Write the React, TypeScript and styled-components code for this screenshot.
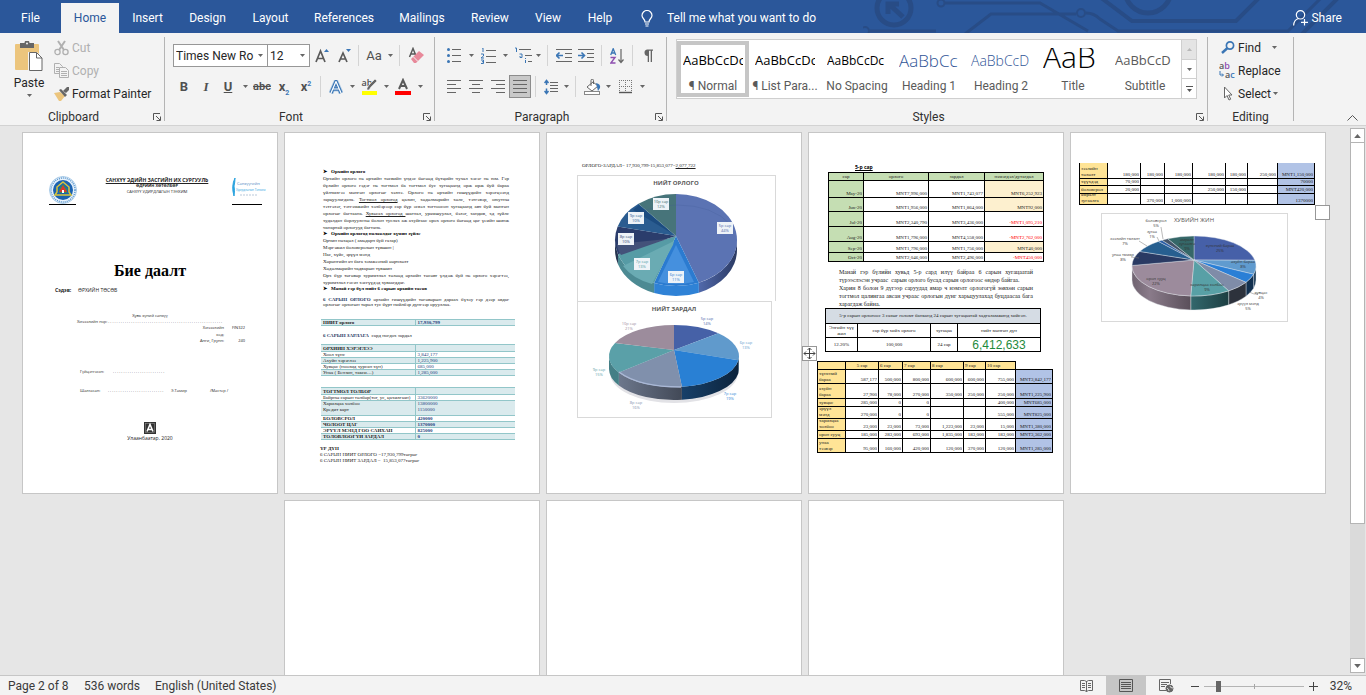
import React from "react";
import styled, { createGlobalStyle, css } from "styled-components";

const Global = createGlobalStyle`
  *, *::before, *::after { box-sizing: border-box; }
  html, body { margin: 0; padding: 0; overflow: hidden; }
  body { font-family: Roboto, "Noto Sans", sans-serif; font-size: 12px; color: #262626; }
  button, input, select { font: inherit; color: inherit; margin: 0; }
  table { border-collapse: collapse; table-layout: fixed; }
  th { font-weight: inherit; text-align: inherit; }
`;

const serif = `"Liberation Serif", "DejaVu Serif", serif`;

/* ---------- shell ---------- */

const Window = styled.div`
  height: 100vh;
  display: flex;
  flex-direction: column;
  background: #f3f3f3;
`;

const TitleBar = styled.header`
  position: relative;
  height: 33px;
  flex: none;
  display: flex;
  align-items: flex-end;
  background: #2b579a;
  color: #fff;
  overflow: hidden;
`;

const CircuitArt = styled.svg`
  position: absolute;
  right: 0;
  top: 0;
  fill: none;
  stroke: #284c86;
`;

const Tabs = styled.nav`
  display: flex;
  height: 30px;
`;

const Tab = styled.button<{ $w: number; $active?: boolean }>`
  width: ${(p) => p.$w}px;
  height: 30px;
  padding: 0;
  border: 0;
  text-align: center;
  background: ${(p) => (p.$active ? "#f3f3f3" : "transparent")};
  color: ${(p) => (p.$active ? "#2b579a" : "#fff")};
`;

const TellMe = styled.button`
  position: relative;
  display: flex;
  align-items: center;
  gap: 14px;
  height: 30px;
  margin-left: 15px;
  padding: 0;
  border: 0;
  background: transparent;
  color: #fff;
`;

const Share = styled(TellMe)`
  gap: 3px;
  margin-left: auto;
  margin-right: 24px;
`;

/* ---------- ribbon ---------- */

const Ribbon = styled.section`
  flex: none;
  height: 93px;
  display: flex;
  border-bottom: 1px solid #d2d2d2;
  background: #f3f3f3;
`;

const Group = styled.div<{ $w: number }>`
  width: ${(p) => p.$w}px;
  flex: none;
  display: flex;
  flex-direction: column;
`;

const Divider = styled.div`
  width: 1px;
  flex: none;
  margin: 4px 0;
  background: #b4b4b4;
`;

const Caption = styled.div`
  display: flex;
  align-items: center;
  height: 16px;
  margin-top: auto;
  text-align: center;
  color: #303030;
  span { flex: 1; }
`;

const Launcher = styled.button`
  width: 17px;
  height: 16px;
  padding: 0 0 0 6px;
  border: 0;
  background: transparent;
  display: flex;
  align-items: center;
`;

const ClipBody = styled.div`
  display: flex;
  padding: 3px 0 0 4px;
`;

const PasteButton = styled.button`
  width: 50px;
  padding: 5px 0 0;
  border: 0;
  background: transparent;
  display: flex;
  flex-direction: column;
  align-items: center;
  gap: 2px;
  line-height: 18px;
`;

const Stack = styled.div`
  display: flex;
  flex-direction: column;
`;

const LabelButton = styled.button<{ $off?: boolean; $gap: number }>`
  height: 23px;
  display: flex;
  align-items: center;
  gap: ${(p) => p.$gap}px;
  padding: 0;
  border: 0;
  background: transparent;
  white-space: nowrap;
  color: ${(p) => (p.$off ? "#b0b0b0" : "#262626")};
`;

const ToolBody = styled.div`
  display: flex;
  flex-direction: column;
  gap: 8px;
  padding: 11px 0 0 8px;
`;

const ToolRow = styled.div`
  display: flex;
  align-items: center;
  height: 23px;
`;

const Tool = styled.button<{ $w?: number; $on?: boolean }>`
  width: ${(p) => p.$w ?? 22}px;
  height: 23px;
  flex: none;
  display: flex;
  align-items: center;
  justify-content: center;
  padding: 0;
  border: ${(p) => (p.$on ? "1px solid #8c8c8c" : "0")};
  background: ${(p) => (p.$on ? "#c8c8c8" : "transparent")};
  color: #505050;
  line-height: 20px;
`;

const Bold = styled.b`font-size: 13px;`;
const Italic = styled.i`font-size: 13px; font-family: ${serif}; font-weight: bold;`;
const Under = styled.b`font-size: 13px; text-decoration: underline;`;
const Strike = styled.s`font-weight: 600; font-size: 11px;`;
const Script = styled.b`
  font-size: 13px;
  sub, sup { font-size: 7px; line-height: 0; color: #3b76b5; }
`;
const CaseLabel = styled.span`font-size: 13px;`;

const Bar = styled.div<{ $m: number }>`
  width: 1px;
  height: 21px;
  flex: none;
  margin: 0 ${(p) => p.$m}px;
  background: #d4d4d4;
`;

const Combo = styled.label<{ $w: number }>`
  position: relative;
  width: ${(p) => p.$w}px;
  height: 23px;
  flex: none;
  display: flex;
  align-items: center;
  border: 1px solid #979797;
  background: #fff;
  & + & { margin-left: -1px; }
  select {
    appearance: none;
    width: 100%;
    height: 21px;
    padding: 0 12px 0 2px;
    border: 0;
    background: transparent;
  }
  svg { position: absolute; right: 4px; top: 9px; pointer-events: none; }
`;

const Gallery = styled.div`
  display: flex;
  width: 521px;
  height: 60px;
  margin: 6px 0 0 9px;
  border: 1px solid #cfcfcf;
  background: #fff;
`;

const StyleCell = styled.button<{ $on?: boolean }>`
  width: 72px;
  height: 56px;
  margin-top: 1px;
  flex: none;
  display: flex;
  flex-direction: column;
  align-items: center;
  padding: 3px 0 0;
  border: 4px solid ${(p) => (p.$on ? "#c6c6c6" : "transparent")};
  background: transparent;
  color: #5a5a5a;
  line-height: 14px;
  white-space: nowrap;
`;

const Sample = styled.span<{ $size: number; $color: string; $light?: boolean }>`
  width: 60px;
  height: 24px;
  margin-bottom: 7px;
  flex: none;
  overflow: hidden;
  text-align: left;
  line-height: ${(p) => (p.$size > 20 ? 17 : 25)}px;
  font-family: "Open Sans", sans-serif;
  font-size: ${(p) => p.$size}px;
  font-weight: ${(p) => (p.$light ? 300 : 400)};
  color: ${(p) => p.$color};
`;

const GalleryNav = styled.div`
  width: 15px;
  display: flex;
  flex-direction: column;
  margin-left: auto;
  border-left: 1px solid #cfcfcf;
  button {
    flex: 1;
    display: flex;
    align-items: center;
    justify-content: center;
    padding: 0;
    border: 0;
    background: #fff;
  }
  button + button { border-top: 1px solid #cfcfcf; }
  button:first-child { background: #e4e4e4; }
`;

const EditBody = styled(Stack)`padding: 3px 0 0 11px;`;

const IconSlot = styled.span`
  width: 17px;
  flex: none;
  display: flex;
  justify-content: center;
`;

const Collapse = styled.button`
  margin: auto 8px 1px auto;
  padding: 0;
  border: 0;
  background: transparent;
`;

/* ---------- document area ---------- */

const Workspace = styled.main`
  flex: 1;
  min-height: 0;
  display: flex;
  background: #e6e6e6;
`;

const Desk = styled.div`
  flex: 1;
  overflow: hidden;
  display: flex;
  flex-wrap: wrap;
  align-content: flex-start;
  justify-content: center;
  gap: 6px;
  padding: 6px 1px 0 0;
`;

const Page = styled.article`
  position: relative;
  width: 256px;
  height: 362px;
  flex: none;
  border: 1px solid #c6c6c6;
  background: #fff;
  color: #222;
  font-family: ${serif};
  font-size: 5px;
  line-height: 6px;
`;

const Scroll = styled.div`
  width: 17px;
  display: flex;
  flex-direction: column;
  padding: 2px 1px;
`;

const ScrollTrack = styled.div`
  flex: 1;
  background: #dadada;
`;

const ScrollThumb = styled.div`
  height: 74%;
  border: 1px solid #b4b4b4;
  border-top: 0;
  background: #fff;
`;

const ScrollButton = styled.button`
  height: 15px;
  display: flex;
  align-items: center;
  justify-content: center;
  padding: 0;
  border: 1px solid #b4b4b4;
  background: #fff;
`;

const Handle = styled.button<{ $x: number; $y: number }>`
  position: absolute;
  left: ${(p) => p.$x}px;
  top: ${(p) => p.$y}px;
  width: 15px;
  height: 15px;
  display: flex;
  align-items: center;
  justify-content: center;
  padding: 0;
  border: 1px solid #979797;
  background: #fff;
  z-index: 1;
`;

/* ---------- cover page ---------- */

const CoverHead = styled.div`
  display: flex;
  justify-content: space-between;
  padding: 43px 15px 0 26px;
  font-family: "Open Sans", sans-serif;
  text-align: center;
`;

const Crest = styled.div<{ $w: number }>`
  width: ${(p) => p.$w}px;
  height: 29px;
  border-bottom: 1px solid #000;
  svg { overflow: visible; }
`;

const School = styled.div`
  padding: 1px 0 0 6px;
  white-space: nowrap;
  font-size: 4px;
  b { display: block; }
  b:first-child { font-size: 5px; text-decoration: underline; }
`;

const CoverTitle = styled.h1`
  margin: 56px 0 0;
  font: bold 16px/20px ${serif};
  text-align: center;
  color: #000;
`;

const CoverRow = styled.div<{ $top?: number; $left?: number; $size?: number }>`
  display: flex;
  height: 6px;
  margin-top: ${(p) => p.$top ?? 0}px;
  padding-left: ${(p) => p.$left ?? 0}px;
  justify-content: ${(p) => (p.$left ? "flex-start" : "center")};
  font-family: "Open Sans", sans-serif;
  font-size: ${(p) => p.$size ?? 4}px;
  white-space: nowrap;
`;

const Slot = styled.span<{ $w: number; $right?: boolean }>`
  width: ${(p) => p.$w}px;
  flex: none;
  text-align: ${(p) => (p.$right ? "right" : "left")};
`;

const CoverMark = styled.div`
  display: flex;
  justify-content: center;
  height: 12px;
  margin: 28px 0 1px;
`;

/* ---------- report pages ---------- */

const Report = styled.div`
  padding: 36px 30px 0 38px;
`;

const Bullet = styled.h2`
  display: flex;
  gap: 4px;
  margin: 0;
  font: bold 5px/6px ${serif};
  color: #000;
`;

const Line = styled.p<{ $fill?: boolean; $h?: number; $top?: number; $size?: number }>`
  height: ${(p) => p.$h ?? 7}px;
  line-height: ${(p) => p.$h ?? 7}px;
  margin: ${(p) => p.$top ?? 0}px 0 0;
  font-size: ${(p) => p.$size ?? 5}px;
  white-space: nowrap;
  ${(p) => p.$fill && css`text-align: justify; text-align-last: justify;`}
  b { color: #1f3864; }
`;

const Ledger = styled.table<{ $top: number }>`
  width: 194px;
  margin: ${(p) => p.$top}px 0 0 -2px;
  border-bottom: 1px solid #92c6c9;
  line-height: 5px;
  td, th {
    border-top: 1px solid #92c6c9;
    padding: 0 0 0 2px;
    white-space: nowrap;
    overflow: hidden;
  }
  td:last-child { border-left: 1px solid #92c6c9; color: #24427c; }
`;

const LedgerRow = styled.tr<{ $h: number; $tint?: boolean; $bold?: boolean; $join?: boolean }>`
  height: ${(p) => p.$h}px;
  background: ${(p) => (p.$tint ? "#daeaed" : "#fff")};
  font-weight: ${(p) => (p.$bold ? "bold" : "normal")};
  vertical-align: ${(p) => (p.$join ? "top" : "middle")};
  && td { ${(p) => p.$join && css`border-top-color: #daeaed;`} }
`;

const Summary = styled.div`
  margin: 6px 0 0 -3px;
`;

const ChartPage = styled.div`
  padding: 30px 0 0 30px;
`;

const ChartFrame = styled.figure<{ $w: number; $h: number; $joined?: boolean }>`
  width: ${(p) => p.$w}px;
  height: ${(p) => p.$h}px;
  margin: 0;
  border: 1px solid #d9d9d9;
  border-bottom-width: ${(p) => (p.$joined ? 0 : 1)}px;
  svg { display: block; overflow: visible; }
`;

const ChartText = styled.text<{ $size?: number; $start?: boolean }>`
  font-family: "Open Sans", sans-serif;
  font-size: ${(p) => p.$size ?? 4}px;
  text-anchor: ${(p) => (p.$start ? "start" : "middle")};
`;

const Grid = styled.table<{ $w: number; $ml: number; $mt: number; $open?: boolean }>`
  width: ${(p) => p.$w}px;
  margin: ${(p) => p.$mt}px 0 0 ${(p) => p.$ml}px;
  font-size: 5px;
  line-height: 6px;
  color: #222;
  ${(p) => p.$open && css`tr:first-child td { border-top: 0; }`}
`;

type CellProps = { $bg?: string; $align?: string; $v?: string; $bare?: boolean; $color?: string };
const Cell = styled.td<CellProps>`
  padding: 0 1px;
  overflow: hidden;
  white-space: nowrap;
  border: ${(p) => (p.$bare ? "0" : "1px solid #000")};
  background: ${(p) => p.$bg ?? "transparent"};
  text-align: ${(p) => p.$align ?? "right"};
  vertical-align: ${(p) => p.$v ?? "bottom"};
  color: ${(p) => p.$color ?? "inherit"};
`;

const Clip = styled.div<{ $h: number }>`
  height: ${(p) => p.$h}px;
  display: flex;
  flex-direction: column;
  justify-content: flex-end;
  overflow: hidden;
  white-space: pre;
`;

const MonthTitle = styled.h2`
  margin: 0 0 0 46px;
  padding-top: 31px;
  font: bold 5px/7px "Open Sans", sans-serif;
  text-decoration: underline;
  color: #000;
`;

const Note = styled.div`
  margin: 6px 30px 0;
`;

const Total = styled.span`
  font: 12px/12px "Liberation Sans", sans-serif;
  color: #1e8a3c;
`;

const ChartHolder = styled.div`padding: 8px 0 0 30px;`;

const Equation = styled.p`
  margin: 0 0 6px 5px;
  line-height: 6px;
  white-space: nowrap;
`;

/* ---------- status bar ---------- */

const Status = styled.footer`
  flex: none;
  height: 20px;
  display: flex;
  align-items: center;
  border-top: 1px solid #c6c6c6;
  padding: 1px 14px 0 8px;
  line-height: 18px;
  color: #3a3a3a;
`;

const StatusItem = styled.span<{ $w: number }>`
  width: ${(p) => p.$w}px;
  white-space: nowrap;
`;

const Spacer = styled.div`flex: 1;`;

const ViewButton = styled.button<{ $on?: boolean }>`
  width: 40px;
  height: 19px;
  margin-top: -1px;
  display: flex;
  align-items: center;
  justify-content: center;
  padding: 0;
  border: 0;
  background: ${(p) => (p.$on ? "#c6c6c6" : "transparent")};
`;

const ZoomButton = styled.button`
  width: 18px;
  height: 18px;
  display: flex;
  align-items: center;
  justify-content: center;
  padding: 0;
  border: 0;
  background: transparent;
`;

const ZoomRange = styled.input`
  appearance: none;
  width: 100px;
  height: 11px;
  background:
    linear-gradient(#a6a6a6, #a6a6a6) center / 1px 5px no-repeat,
    linear-gradient(#b4b4b4, #b4b4b4) center / 100% 1px no-repeat;
  &::-webkit-slider-thumb {
    appearance: none;
    width: 5px;
    height: 11px;
    background: #666;
  }
`;

const ZoomValue = styled.span`
  width: 30px;
  text-align: right;
`;

/* ---------- icons ---------- */

const Arrow = ({ up, big, color = "#666" }: { up?: boolean; big?: boolean; color?: string }) => (
  <svg width={big ? 7 : 5} height={big ? 4 : 3} viewBox="0 0 5 3"><path d={up ? "M0 3h5L2.500 0z" : "M0 0h5L2.500 3z"} fill={color} /></svg>
);

const Drop = ({ w = 12 }: { w?: number }) => (
  <Tool $w={w} aria-label="More"><Arrow /></Tool>
);

const LauncherIcon = () => (
  <svg width="8" height="8" viewBox="0 0 8 8" fill="none" stroke="#555"><path d="M.5 7V.5H7M3 3l4 4M7.500 3.500v4h-4" /></svg>
);

const PasteIcon = () => (
  <svg width="28" height="31" viewBox="0 0 28 31">
    <rect x="0" y="3" width="24" height="26" rx="1" fill="#ecc57d" />
    <path d="M5 2h4.500a2.500 2.500 0 0 1 5 0H19v5H5z" fill="#666" /><circle cx="12" cy="2.500" r="1" fill="#f3f3f3" />
    <path d="M13 11h9l6 6v14H13z" fill="#f3f3f3" />
    <path d="M14.500 11.500h7l5.500 5.500v12.500H14.500z" fill="#fff" stroke="#666" /><path d="M21.500 11.500V17H27" fill="none" stroke="#666" />
  </svg>
);
const CutIcon = () => (
  <svg width="15" height="16" viewBox="0 0 15 16" fill="none" stroke="#b0b0b0"><path d="M4 1l6 9M11 1L5 10" strokeWidth="2" /><circle cx="3.500" cy="12" r="2.600" strokeWidth="1.300" /><circle cx="11.500" cy="12" r="2.600" strokeWidth="1.300" /></svg>
);
const CopyIcon = () => (
  <svg width="15" height="15" viewBox="0 0 15 15" fill="#f3f3f3" stroke="#b0b0b0"><path d="M.5.5h5l3 3v7h-8zM2 4.500h3M2 6.500h4M2 8.500h4" /><path d="M5.500 4.500h6l3 3v7h-9zM7 8.500h6M7 10.500h6M7 12.500h6" /></svg>
);
const BrushIcon = () => (
  <svg width="16" height="14" viewBox="0 0 16 14"><path d="M0 6l6-1 5 4-4 5H5z" fill="#ecc57d" /><path d="M5 3l2-1 6 6-2 2z" fill="#666" /><path d="M9 4l4-4 2 0v3l-3 3z" fill="#666" /></svg>
);

const GrowIcon = ({ small }: { small?: boolean }) => (
  <svg width="14" height="16" viewBox="0 0 14 16">
    <path d={small ? "M2 14L6 5l4 9M3.500 11h5" : "M1 14L5.500 3l4.500 11M2.500 10.500h6"} fill="none" stroke="#5a5a5a" strokeWidth="1.700" />
    <path d={small ? "M9 1h5l-2.500 3z" : "M9 4h5l-2.500-3z"} fill="#3b76b5" />
  </svg>
);
const ClearIcon = () => (
  <svg width="16" height="17" viewBox="0 0 16 17"><path d="M1.500 10L5 1.500 8.500 10M2.800 7h4.500" fill="none" stroke="#5a5a5a" strokeWidth="1.500" /><path d="M3 12l8-8 5 4-8 8H6z" fill="#e8899a" /><path d="M5 9.500l5 5" stroke="#f3f3f3" /></svg>
);
const EffectIcon = () => (
  <svg width="14" height="14" viewBox="0 0 14 14" fill="none" strokeLinejoin="round"><path d="M2 13L7 1.500 12 13M4 9h6" stroke="#86b3dc" strokeWidth="5" opacity=".5" /><path d="M2 13L7 1.500 12 13M4 9h6" stroke="#3b76b5" strokeWidth="3.400" /><path d="M2 13L7 1.500 12 13M4 9h6" stroke="#fff" strokeWidth="1.200" /></svg>
);
const HighlightIcon = () => (
  <svg width="17" height="17" viewBox="0 0 17 17"><ChartText x="6" y="8" $size={9} fill="#505050" fontWeight="600">ab</ChartText><path d="M14 1l2 2-6 6-2 3H6v-2l2-3z" fill="#666" stroke="#f3f3f3" strokeWidth=".6" /><path d="M1 13h15v4H1z" fill="#ff0" /></svg>
);
const FontColorIcon = () => (
  <svg width="16" height="17" viewBox="0 0 16 17"><path d="M4 11L8 2l4 9M5.500 8h5" fill="none" stroke="#5a5a5a" strokeWidth="2" /><path d="M0 13h16v4H0z" fill="red" /></svg>
);
const BulletsIcon = () => (
  <svg width="14" height="15" viewBox="0 0 14 15"><g fill="#3b76b5"><circle cx="1.500" cy="1.500" r="1.500" /><circle cx="1.500" cy="7.500" r="1.500" /><circle cx="1.500" cy="13.500" r="1.500" /></g><path d="M5 1.500h9M5 7.500h9M5 13.500h9" stroke="#666" /></svg>
);
const NumberIcon = () => (
  <svg width="15" height="16" viewBox="0 0 15 16" fill="#3b76b5"><path d="M1 0h1v4M0 6h2.500v2L0 10h3M0 12h2.500v3.500H0M1 13.700h1.500" fill="none" stroke="#3b76b5" /><path d="M5 2.500h10M5 8.500h10M5 14.500h10" stroke="#666" /></svg>
);
const MultiIcon = () => (
  <svg width="17" height="17" viewBox="0 0 17 17" fill="none"><path d="M0 1h1.500v4M4.500 7h2.500v3.500H5V9M10.500 11v1M10.500 13v3" stroke="#3b76b5" /><path d="M4 2.500h12M10 8.500h7M13 14.500h4" stroke="#666" /></svg>
);
const IndentIcon = ({ inward }: { inward?: boolean }) => (
  <svg width="16" height="14" viewBox="0 0 16 14" fill="none"><path d="M0 .5h16M9 4.500h7M9 8.500h7M0 12.500h16" stroke="#666" /><path d={inward ? "M0 6.500h6M3.500 3.500l3 3-3 3" : "M7 6.500H1M3.500 3.500l-3 3 3 3"} stroke="#3b76b5" strokeWidth="1.600" /></svg>
);
const SortIcon = () => (
  <svg width="14" height="16" viewBox="0 0 14 16" fill="none"><path d="M.7 7L3.200.7 5.700 7M1.500 5h3.500" stroke="#3b76b5" strokeWidth="1.300" /><path d="M.5 9.500H5L.8 15H5.500" stroke="#8e4fb0" strokeWidth="1.400" /><path d="M11 1v13M8.500 11.500L11 14.500l2.500-3" stroke="#666" strokeWidth="1.200" /></svg>
);
const PilcrowIcon = () => (
  <svg width="11" height="13" viewBox="0 0 11 13"><path d="M5 .5h6v1.200H10V13H8.700V1.700H7V13H5.700V7A3.300 3.300 0 0 1 5 .5z" fill="#666" /></svg>
);
const alignPaths: Record<string, string> = {
  left: "M0 .5h14M0 4.500h9M0 8.500h14M0 12.500h9",
  center: "M0 .5h14M3 4.500h8M0 8.500h14M3 12.500h8",
  right: "M0 .5h14M5 4.500h9M0 8.500h14M5 12.500h9",
  justify: "M0 .5h14M0 4.500h14M0 8.500h14M0 12.500h14",
};
const AlignIcon = ({ kind }: { kind: string }) => (
  <svg width="14" height="13" viewBox="0 0 14 13"><path d={alignPaths[kind]} stroke="#666" fill="none" /></svg>
);
const SpacingIcon = () => (
  <svg width="14" height="16" viewBox="0 0 14 16" fill="none"><path d="M2.500 1v5M.5 4l2-2.500 2 2.500M2.500 9.500v5M.5 12l2 2.500 2-2.500" stroke="#3b76b5" strokeWidth="1.500" /><path d="M6 3.500h8M6 6.500h8M6 9.500h8M6 12.500h8" stroke="#666" /></svg>
);
const FillIcon = () => (
  <svg width="17" height="16" viewBox="0 0 17 16"><path d="M3 8l6-5 5 4-6 5z" fill="#fff" stroke="#666" /><path d="M7 7V1.500a1.200 1.200 0 0 1 2.500 0V5" fill="none" stroke="#666" /><path d="M12 4q5 1 4 5l-2 3z" fill="#3b76b5" /><rect x=".5" y="12.500" width="15" height="3" fill="#fff" stroke="#888" /></svg>
);
const BordersIcon = () => (
  <svg width="13" height="14" viewBox="0 0 13 14" fill="none" stroke="#777"><path d="M0 .5h13M0 6.500h13M.5 0v12M6.500 0v12M12.500 0v12" strokeDasharray="1 1" /><path d="M0 12.500h13" stroke="#555" strokeWidth="1.400" /></svg>
);
const FindIcon = () => (
  <svg width="14" height="13" viewBox="0 0 14 13" fill="none"><circle cx="9" cy="4.500" r="3.600" stroke="#3b76b5" strokeWidth="1.700" /><path d="M6.500 7L1 12" stroke="#3b76b5" strokeWidth="2.400" /></svg>
);
const ReplaceIcon = () => (
  <svg width="17" height="17" viewBox="0 0 17 17" fontWeight="600"><ChartText x="0" y="7" $start $size={9} fill="#555">a<tspan fill="#8e4fb0">b</tspan></ChartText><ChartText x="6" y="16" $start $size={9} fill="#555">a<tspan fill="#3b76b5">c</tspan></ChartText><path d="M1 9v4h3M3 11.500l1.500 1.500L3 14.500" fill="none" stroke="#3b76b5" /></svg>
);
const SelectIcon = () => (
  <svg width="10" height="15" viewBox="0 0 10 15"><path d="M1.500 1v11l2.500-2.500L6 14l1.700-.8-2-4.200H9z" fill="#fff" stroke="#666" /></svg>
);
const BulbIcon = () => (
  <svg width="12" height="17" viewBox="0 0 12 17" fill="none" stroke="#fff" strokeWidth="1.200"><path d="M4 12c0-3-3-3.500-3-6.500a5 5 0 0 1 10 0C11 8.500 8 9 8 12zM4 14h4M4.500 16h3" /></svg>
);
const ShareIcon = () => (
  <svg width="15" height="16" viewBox="0 0 15 16" fill="none" stroke="#fff" strokeWidth="1.200"><circle cx="7.500" cy="4.800" r="4.200" /><path d="M.6 15.500q.4-6 5-7M11.500 9v6.500M8 12.300h7" /></svg>
);
const MoveIcon = () => (
  <svg width="13" height="13" viewBox="0 0 13 13" fill="none" stroke="#444"><path d="M6.500 1v11M1 6.500h11M4.500 3l2-2 2 2M4.500 10l2 2 2-2M3 4.500l-2 2 2 2M10 4.500l2 2-2 2" /></svg>
);
const ReadIcon = () => (
  <svg width="13" height="12" viewBox="0 0 13 12" fill="none" stroke="#666"><path d="M.5.500h4l2 1 2-1h4v10h-4l-2 1-2-1h-4zM6.500 1v11M2 3.500h3M2 5.500h3M2 7.500h3M8 3.500h3M8 5.500h3M8 7.500h3" /></svg>
);
const PrintIcon = () => (
  <svg width="14" height="13" viewBox="0 0 14 13" fill="none" stroke="#555"><path d="M.5.5h13v12H.5zM2 3.500h10M2 5.500h10M2 7.500h10M2 9.500h10" /></svg>
);
const WebIcon = () => (
  <svg width="15" height="14" viewBox="0 0 15 14" fill="none" stroke="#666"><path d="M7 11.500H.5V.5h11V5M2 3.500h8M2 5.500h6M2 7.500h4" /><circle cx="10.500" cy="9.500" r="3.500" fill="#666" /><path d="M8 9q2 1 2 3M11 7q0 2 3 2" stroke="#f3f3f3" strokeWidth=".8" /></svg>
);

const Circuit = () => (
  <CircuitArt width="503" height="33" viewBox="863 0 503 33" strokeWidth="4" aria-hidden="true">
    <circle cx="894" cy="8" r="17" strokeWidth="5" />
    <path d="M903 17L890 5M888 14V4h11" strokeWidth="5" />
    <path d="M870 31h66" strokeWidth="3" /><circle cx="865" cy="31" r="4" strokeWidth="2" />
    <circle cx="941" cy="3" r="3.500" strokeWidth="2" />
    <path d="M945 3h95l48 28M965 34l26-20h85M1086 13q8 0 14 6l18 12h170l34-34" strokeWidth="3" />
    <circle cx="1081" cy="13" r="4" strokeWidth="2" />
    <path d="M1100-3l32 24h104l26-26M1300 36l38-38" strokeWidth="4" />
    <circle cx="1148" cy="-10" r="23" strokeWidth="5" />
  </CircuitArt>
);

/* ---------- 3-D pie ---------- */

type Slice = { to: number; top: string; side: string };
type PieProps = { cx: number; cy: number; hub: number; rx: number; ry: number; depth: number; edge?: string; slices: Slice[] };

function Pie({ cx, cy, hub, rx, ry, depth, edge, slices }: PieProps) {
  const at = (deg: number) => {
    const t = (deg * Math.PI) / 180;
    return [cx + rx * Math.sin(t), cy - ry * Math.cos(t)];
  };
  const parts = slices.map((s, i) => ({ ...s, from: i ? slices[i - 1].to : 0 }));
  return (
    <g>
      {parts.map((s, i) => {
        const a = Math.max(s.from, 90);
        const b = Math.min(s.to, 270);
        if (a >= b) return null;
        const [x0, y0] = at(a);
        const [x1, y1] = at(b);
        return <path key={i} fill={s.side} stroke={edge} strokeWidth=".4" d={`M${x0} ${y0}V${y0 + depth}A${rx} ${ry} 0 0 1 ${x1} ${y1 + depth}V${y1}A${rx} ${ry} 0 0 0 ${x0} ${y0}Z`} />;
      })}
      {parts.map((s, i) => {
        const [x0, y0] = at(s.from);
        const [x1, y1] = at(s.to);
        return <path key={i} fill={s.top} stroke={edge} strokeWidth=".4" d={`M${cx} ${hub}L${x0} ${y0}A${rx} ${ry} 0 ${s.to - s.from > 180 ? 1 : 0} 1 ${x1} ${y1}Z`} />;
      })}
    </g>
  );
}

type LabelProps = { x: number; y: number; name: string; pct?: string; color?: string; boxed?: boolean };
const PieLabel = ({ x, y, name, pct, color = "#333", boxed }: LabelProps) => (
  <g fill={color}>
    {boxed && <rect x={x - 8} y={y - 5} width="16" height="12" fill="#eef3f8" />}
    <ChartText x={x} y={y}>{name}</ChartText>
    {pct && <ChartText x={x} y={y + 5}>{pct}</ChartText>}
  </g>
);

const IncomeChart = () => (
  <ChartFrame $w={199} $h={126} $joined>
    <svg width="197" height="125" viewBox="1 1 197 125" role="img" aria-label="НИЙТ ОРЛОГО">
      <defs><linearGradient id="wall" x1="0" x2="1"><stop offset="0" stopColor="#5169ab" /><stop offset="1" stopColor="#2b3a63" /></linearGradient></defs>
      <ChartText x="99" y="10" $size={6} fontWeight="bold" fill="#595959">НИЙТ ОРЛОГО</ChartText>
      <Pie cx={99} cy={65} hub={61} rx={61} ry={46} depth={10} slices={[
        { to: 158, top: "#5b73b3", side: "url(#wall)" }, { to: 201, top: "#2b7bd0", side: "#2f82d6" },
        { to: 252, top: "#569ba5", side: "#4c8a93" }, { to: 287, top: "#2b3d6c", side: "#26344f" },
        { to: 322, top: "#2a5c90", side: "#24588f" }, { to: 360, top: "#47747a", side: "#47747a" },
      ]} />
      <path d="M99 70L81 107q18 4 36 0z" fill="#4590de" />
      <path d="M97 66L46 91q10 13 29 18L96 70z" fill="#6aabb3" />
      <path d="M90 64L40 69q0 5 4 11z" fill="#43527a" />
      <path d="M96 59L62 30l-6 5z" fill="#1c4c80" />
      <path d="M46 50q18-20 54-20t54 20" fill="none" stroke="#3f5a93" strokeWidth=".4" opacity=".6" />
      <PieLabel x={148} y={52} name="5р сар" pct="44%" color="#4661a7" boxed />
      <PieLabel x={99} y={101} name="6р сар" pct="11%" color="#2b7bd0" boxed />
      <PieLabel x={65} y={88} name="7р сар" pct="13%" color="#4b9aa2" boxed />
      <PieLabel x={49} y={63} name="8р сар" pct="10%" color="#2b3d6c" boxed />
      <PieLabel x={59} y={42} name="9р сар" pct="10%" color="#24588f" boxed />
      <PieLabel x={84} y={28} name="10р сар" pct="12%" color="#356768" boxed />
    </svg>
  </ChartFrame>
);

const ExpenseChart = () => (
  <ChartFrame $w={195} $h={117}>
    <svg width="193" height="115" viewBox="1 1 193 115" role="img" aria-label="НИЙТ ЗАРДАЛ">
      <defs><linearGradient id="navy" x1="0" x2="1"><stop offset="0" stopColor="#174069" /><stop offset="1" stopColor="#0c233c" /></linearGradient>
        <linearGradient id="slate" x1="0" x2="1"><stop offset="0" stopColor="#6c778c" /><stop offset="1" stopColor="#424957" /></linearGradient></defs>
      <ChartText x="97" y="10" $size={6} fontWeight="bold" fill="#595959">НИЙТ ЗАРДАЛ</ChartText>
      <ellipse cx="97" cy="72" rx="64" ry="30" fill="#e2e2e6" />
      <Pie cx={97} cy={55} hub={49} rx={65} ry={31} depth={13} slices={[
        { to: 43, top: "#4661a7", side: "#2f3f70" }, { to: 98, top: "#609acc", side: "#1d4668" },
        { to: 173, top: "#2980d4", side: "url(#navy)" }, { to: 238, top: "#8090ac", side: "url(#slate)" },
        { to: 295, top: "#5aa0a8", side: "#447f86" }, { to: 360, top: "#9c8c9c", side: "#6c5f6c" },
      ]} />
      <path d="M42 71q20 15 62 15" fill="none" stroke="#a9b8d6" strokeWidth="1.500" />
      <PieLabel x={130} y={19} name="5р сар" pct="14%" color="#4661a7" />
      <PieLabel x={169} y={43} name="6р сар" pct="13%" color="#609acc" />
      <PieLabel x={153} y={94} name="7р сар" pct="19%" color="#2980d4" />
      <PieLabel x={59} y={103} name="8р сар" pct="16%" color="#8090ac" />
      <PieLabel x={22} y={70} name="9р сар" pct="15%" color="#5aa0a8" />
      <PieLabel x={52} y={24} name="10р сар" pct="21%" color="#9c8c9c" />
    </svg>
  </ChartFrame>
);

const ShareChart = () => (
  <ChartFrame $w={187} $h={109}>
    <svg width="185" height="107" viewBox="1 1 185 107" role="img" aria-label="ХУВИЙН ЖИН">
      <defs><linearGradient id="mauve" x1="0" x2="1"><stop offset="0" stopColor="#6f6370" /><stop offset=".3" stopColor="#8a7b8a" /><stop offset="1" stopColor="#5a4f5a" /></linearGradient>
        <linearGradient id="teal" x1="0" x2="1"><stop offset="0" stopColor="#33686d" /><stop offset="1" stopColor="#1c3e42" /></linearGradient></defs>
      <ChartText x="93" y="9" $size={6} fill="#595959">ХУВИЙН ЖИН</ChartText>
      <Pie cx={93} cy={53} hub={47} rx={62} ry={30} depth={14} edge="#e4e8ee" slices={[
        { to: 79, top: "#4660a8", side: "#2f3f70" }, { to: 106, top: "#609bcf", side: "#1c3c58" },
        { to: 123, top: "#2a7fd6", side: "#12304f" }, { to: 146, top: "#7f8ca8", side: "#2d323c" },
        { to: 183, top: "#58a0a6", side: "url(#teal)" }, { to: 271, top: "#9c8b9c", side: "url(#mauve)" },
        { to: 299, top: "#293a63", side: "#293a63" }, { to: 325, top: "#275f90", side: "#275f90" },
        { to: 329, top: "#2b5ea5", side: "#2b5ea5" }, { to: 335, top: "#44546a", side: "#44546a" },
        { to: 360, top: "#356768", side: "#356768" },
      ]} />
      <path d="M60 14l2 12M56 24l2 4M38 28l8 5M30 44l8 1M148 79l5 2h4" fill="none" stroke="#777" strokeWidth=".5" />
      <PieLabel x={119} y={34} name="хүнсний бараа" pct="25%" />
      <PieLabel x={142} y={50} name="ахуйн бараа" pct="8%" />
      <PieLabel x={160} y={81} name="хувцас" pct="4%" />
      <PieLabel x={147} y={92} name="эрүүл мэнд" pct="5%" />
      <PieLabel x={106} y={73} name="харилцаа холбоо" pct="9%" />
      <PieLabel x={55} y={67} name="орон сууц" pct="22%" />
      <PieLabel x={22} y={43} name="унаа төмөр" pct="8%" />
      <PieLabel x={24} y={27} name="зээлийн төлөлт" pct="7%" />
      <PieLabel x={51} y={20} name="зугаа" pct="1%" />
      <PieLabel x={55} y={9} name="боловсрол" pct="5%" />
      <PieLabel x={86} y={28} name="амралт" />
      <PieLabel x={86} y={32} name="зугаалга" pct="9%" />
    </svg>
  </ChartFrame>
);

/* ---------- pages ---------- */

const SchoolCrest = () => (
  <svg width="28" height="28" viewBox="0 0 28 28">
    <circle cx="14" cy="14" r="13.500" fill="#e8f2fb" stroke="#a9cbe8" /><circle cx="14" cy="14" r="12" fill="none" stroke="#5a97cf" strokeDasharray="1 1" strokeWidth="1.500" />
    <circle cx="14" cy="14" r="10" fill="#1b62b0" /><path d="M14 6l6 5v5l2 3H6l2-3v-5z" fill="none" stroke="#d9c53a" strokeWidth="1.500" />
    <path d="M14 8l4 5v4h-8v-4z" fill="#2f8f57" /><path d="M14 9l4 7h-8z" fill="#d7372f" /><path d="M13 14h2v3h-2z" fill="#fff" />
  </svg>
);
const PartnerLogo = () => (
  <svg width="31" height="24" viewBox="0 0 31 24">
    <path d="M3 2q-4 8-1 18Q3 14 2 10 3 6 3 2z" fill="#2aa3df" stroke="#2aa3df" />
    <ChartText x="5" y="9" $start $size={4} fill="#4a7fc0">Санхүүгийн</ChartText>
    <ChartText x="4" y="15" $start $size={3} fill="#2aa3df">Удирдлагын Тэнхим</ChartText>
    <path d="M8 19h18" stroke="#b9c9da" strokeDasharray="2 1" />
  </svg>
);

const dots = (n: number) => ". ".repeat(n);

const CoverPage = () => (
  <Page>
    <CoverHead>
      <Crest $w={27}><SchoolCrest /></Crest>
      <School><b>САНХҮҮ ЭДИЙН ЗАСГИЙН ИХ СУРГУУЛЬ</b><b>ӨДРИЙН ХӨТӨЛБӨР</b>САНХҮҮ УДИРДЛАГЫН ТЭНХИМ</School>
      <Crest $w={30}><PartnerLogo /></Crest>
    </CoverHead>
    <CoverTitle>Бие даалт</CoverTitle>
    <CoverRow $top={6} $left={32} $size={5}><Slot $w={23}><b>Сэдэв:</b></Slot>ӨРХИЙН ТӨСӨВ</CoverRow>
    <CoverRow $top={20}>Хувь хүний санхүү</CoverRow>
    <CoverRow $left={54}>Хичээлийн нэр: {dots(55)}</CoverRow>
    <CoverRow $left={164}><Slot $w={37} $right>Хичээлийн</Slot><Slot $w={21} $right>FIN322</Slot></CoverRow>
    <CoverRow $top={1} $left={164}><Slot $w={37} $right>код:</Slot></CoverRow>
    <CoverRow $left={164}><Slot $w={37} $right>Анги, Групп:</Slot><Slot $w={21} $right>240</Slot></CoverRow>
    <CoverRow $top={25} $left={57}><Slot $w={33}>Гүйцэтгэсэн:</Slot><Slot $w={52}>{dots(25)}</Slot></CoverRow>
    <CoverRow $top={13} $left={57}><Slot $w={28}>Шалгасан:</Slot><Slot $w={63}>{dots(27)}</Slot><Slot $w={39}>Э.Тамир</Slot>/Мастер /</CoverRow>
    <CoverMark>
      <svg width="12" height="12" viewBox="0 0 12 12"><rect width="12" height="12" fill="#333" /><rect x="1.500" y="1.500" width="9" height="9" fill="none" stroke="#999" strokeWidth=".5" /><path d="M3 9.500L6 2.500l3 7M4 7.500h4" fill="none" stroke="#fff" strokeWidth="1.500" /></svg>
    </CoverMark>
    <CoverRow $size={5}>Улаанбаатар. 2020</CoverRow>
  </Page>
);

type Entry = { h: number; label: string; value?: string; tint?: boolean; bold?: boolean; join?: boolean };
const LedgerTable = ({ top, rows }: { top: number; rows: Entry[] }) => (
  <Ledger $top={top}>
    <colgroup><col width="94" /><col width="100" /></colgroup>
    <tbody>
      {rows.map((r) => (
        <LedgerRow key={r.label} $h={r.h} $tint={r.tint} $bold={r.bold} $join={r.join}><td>{r.label}</td><td>{r.value}</td></LedgerRow>
      ))}
    </tbody>
  </Ledger>
);

const BudgetPage = () => (
  <Page>
    <Report>
      <Bullet><span>➤</span>Өрхийн орлого</Bullet>
      <Line $fill>Өрхийн орлого нь өрхийн төсвийн үндэс бөгөөд бүтцийн чухал хэсэг нь юм. Гэр</Line>
      <Line $fill>бүлийн орлого гэдэг нь тогтмол ба тогтмол бус хугацаанд орж ирж буй бараа</Line>
      <Line $fill>үйлчилгээ мөнгөн орлогыг хэлнэ. Орлого нь өрхийн гишүүдийн хэрэгцээнд</Line>
      <Line $fill>зарцуулагдана. <u>Тогтмол орлогод</u> цалин, хөдөлмөрийн хөлс, тэтгэвэр, оюутны</Line>
      <Line $fill>тэтгэлэг, тэтгэмжийн хэлбэрээр сар бүр эсвэл тогтоосон хугацаанд авч буй мөнгөн</Line>
      <Line $fill>орлогыг багтаана. <u>Хувьсах орлогод </u>шагнал, урамшуулал, бэлэг, хандив, хд зүйлс</Line>
      <Line $fill>худалдан борлуулсны болон туслах аж ахуйгаас орох орлого бөгөөд цаг үеийн шинж</Line>
      <Line>чанартай орлогууд багтана.</Line>
      <Bullet><span>➤</span>Өрхийн орлогод нөлөөлдөг хүчин зүйлс</Bullet>
      <Line>Орчин нөхцөл ( амьдарч буй газар)</Line>
      <Line>Мэргэжил боловсролын түвшин |</Line>
      <Line>Нас, хүйс, эрүүл мэнд</Line>
      <Line>Хөрөнгийн ач бага хэмжээний өөрчлөлт</Line>
      <Line>Хөдөлмөрийн чадварын түвшин</Line>
      <Line $fill>Өрх бүр төгөвөр хуримтлал төлөөд өрхийн төсөвт үлдэж буй нь орлого хэрэгтээ,</Line>
      <Line>хуримтлал гэсэн хэсгүүдэд хуваагддаг.</Line>
      <Bullet><span>➤</span>Манай гэр бүл нийт 6 сарын өрхийн төсөв</Bullet>
      <Line $fill $h={5} $top={5}><b>6 САРЫН ОРЛОГО</b> өрхийн гишүүдийн төгөвөрын дараах бүхэу гэр дээр авдаг</Line>
      <Line $h={5}>орлогыг орлогын төрөл тус бүрт нийлбэр дүнгээр орууллаа.</Line>
      <LedgerTable top={12} rows={[{ h: 6, label: "НИЙТ  орлого", value: "17,930,799", tint: true, bold: true }]} />
      <Line $top={6}><b>6 САРЫН ЗАРЛАГА</b>&nbsp; сард ногдох зардал</Line>
      <LedgerTable top={5} rows={[
        { h: 7, label: "ӨРХИЙН ХЭРЭГЛЭЭ", tint: true, bold: true },
        { h: 6, label: "Хоол хүнс", value: "3,842,177" },
        { h: 6, label: "Ахуйн хэрэглээ", value: "1,225,900", tint: true },
        { h: 6, label: "Хувцас (ноолид хурсан хүн)", value: "685,000" },
        { h: 6, label: "Унаа ( Бензин, такси…)", value: "1,285,000", tint: true },
      ]} />
      <LedgerTable top={11} rows={[
        { h: 7, label: "ТОГТМОЛ ТӨЛБӨР", tint: true, bold: true },
        { h: 6, label: "Байрны сарын төлбөр(тог, ус, цахилгаан)", value: "33620000" },
        { h: 6, label: "Харилцаа холбоо", value: "13800000", tint: true },
        { h: 9, label: "Кредит карт", value: "1150000", tint: true, join: true },
        { h: 6, label: "БОЛОВСРОЛ", value: "420000", bold: true },
        { h: 6, label: "ЧӨЛӨӨТ ЦАГ", value: "1370000", bold: true, tint: true },
        { h: 6, label: "ЭРҮҮЛ МЭНД ГОО САЙХАН", value: "825000", bold: true },
        { h: 6, label: "ТӨЛӨВЛӨӨГҮЙ ЗАРДАЛ", value: "0", bold: true, tint: true },
      ]} />
      <Summary>
        <Line $h={6}><strong>ҮР ДҮН</strong></Line>
        <Line $h={6}>6 САРЫН НИЙТ ОРЛОГО =17,930,799төгрөг</Line>
        <Line $h={6}>6 САРЫН НИЙТ ЗАРДАЛ =&nbsp; 15,853,077төгрөг</Line>
      </Summary>
    </Report>
  </Page>
);

const green = "#c5deb3";
const cream = "#fdf0cf";
const gold = "#ffe496";
const blue = "#b1c3e6";

const months: [string, string, string, string, number, boolean][] = [
  ["May-20", "MNT7,996,000", "MNT1,743,077", "MNT6,252,923", 17, false],
  ["Jun-20", "MNT1,956,000", "MNT1,864,000", "MNT92,000", 14, false],
  ["Jul-20", "MNT2,340,790", "MNT3,436,000", "-MNT1,095,210", 15, true],
  ["Aug-20", "MNT1,796,000", "MNT4,558,000", "-MNT2,762,000", 15, true],
  ["Sep-20", "MNT1,796,000", "MNT1,756,000", "MNT40,000", 11, false],
  ["Oct-20", "MNT2,046,000", "MNT2,496,000", "-MNT450,000", 9, true],
];

const expenseCols = [28, 33, 24, 28, 33, 22, 30, 37];
const expenses: [number, string[]][] = [
  [14, ["хүнсний\nбараа", "587,177", "500,000", "800,000", "600,000", "600,000", "755,000", "MNT3,842,177"]],
  [15, ["ахуйн\nбараа", "27,900", "78,000", "270,000", "350,000", "250,000", "250,000", "MNT1,225,900"]],
  [8, ["хувцас", "285,000", "0", "0", "", "", "400,000", "MNT685,000"]],
  [12, ["эрүүл\nмэнд", "270,000", "0", "0", "", "", "555,000", "MNT825,000"]],
  [12, ["харилцаа\nхолбоо", "23,000", "23,000", "73,000", "1,223,000", "23,000", "15,000", "MNT1,380,000"]],
  [8, ["орон сууц", "185,000", "283,000", "693,000", "1,835,000", "183,000", "183,000", "MNT3,362,000"]],
  [14, ["унаа\nтээвэр", "95,000", "160,000", "420,000", "120,000", "370,000", "120,000", "MNT1,285,000"]],
];
const expensesRest: [number, string[]][] = [
  [16, ["зээлийн\nтөлөлт", "180,000", "180,000", "180,000", "180,000", "180,000", "250,000", "MNT1,150,000"]],
  [7, ["хүүхдэд", "70,000", "", "", "", "", "", "70000"]],
  [8, ["боловсрол", "20,000", "", "", "250,000", "150,000", "", "MNT420,000"]],
  [11, ["амралт\nзугаалга", "", "370,000", "1,000,000", "", "", "", "1370000"]],
];

const ExpenseRows = ({ rows }: { rows: [number, string[]][] }) => (
  <>
    {rows.map(([h, cells]) => (
      <tr key={cells[0]}>
        {cells.map((c, i) => (
          <Cell key={i} $bg={i === 0 ? gold : i === 7 ? blue : undefined} $align={i === 0 ? "left" : "right"}>
            <Clip $h={h - 1}>{c}</Clip>
          </Cell>
        ))}
      </tr>
    ))}
  </>
);
const Cols = ({ widths }: { widths: number[] }) => (
  <colgroup>{widths.map((w, i) => <col key={i} width={w} />)}</colgroup>
);

const MonthlyPage = () => (
  <Page>
    <MonthTitle>5-р сар</MonthTitle>
    <Grid $w={215} $ml={19} $mt={1}>
      <Cols widths={[35, 65, 56, 59]} />
      <tbody>
        <tr>{["сар", "орлого", "зардал", "нэмэгдэл/дутагдал"].map((t) => <Cell as="th" key={t} $bg={green} $align="center"><Clip $h={7}>{t}</Clip></Cell>)}</tr>
        {months.map(([m, a, b, c, h, neg]) => (
          <tr key={m}>
            <Cell $bg={green}><Clip $h={h - 1}>{m}</Clip></Cell>
            <Cell>{a}</Cell>
            <Cell>{b}</Cell>
            <Cell $bg={neg ? undefined : cream} $color={neg ? "#f00" : undefined}>{c}</Cell>
          </tr>
        ))}
      </tbody>
    </Grid>
    <Note>
      <Line $fill $h={8} $size={6}>Манай гэр бүлийн хувьд 5-р сард илүү байраа 6 сарын хугацаатай</Line>
      <Line $h={8} $size={6}>түрээслэсэн учраас&nbsp; сарын орлого бусад сарын орлогоос өндөр байгаа.</Line>
      <Line $fill $h={8} $size={6}>Харин 8 болон 9 дүгээр саруудад ямар ч нэмэлт орлогогүй зөвхөн сарын</Line>
      <Line $fill $h={8} $size={6}>тогтмол цалингаа авсан учраас орлогын дүнг харьцуулахад буцдаасаа бага</Line>
      <Line $h={8} $size={6}>харагдаж байна.</Line>
    </Note>
    <Grid $w={215} $ml={16} $mt={0}>
      <Cols widths={[32, 73, 27, 83]} />
      <tbody>
        <tr><Cell colSpan={4} $bg="#d5dce4" $align="center" $v="middle" height={15}>5-р сарын орлогоос 3 саяыг голомт банканд 24 сарын хугацаатай хадгаламжинд хийсэн.</Cell></tr>
        <tr>
          <Cell $align="center" $v="middle"><Clip $h={13}>{"Энгийн хүү\nжил"}</Clip></Cell>
          <Cell $align="center" $v="middle">сар бүр хийх орлого</Cell>
          <Cell $align="center" $v="middle">хугацаа</Cell>
          <Cell $align="center" $v="middle">нийт мөнгөн дүн</Cell>
        </tr>
        <tr>
          <Cell $align="center" $v="middle">12.20%</Cell>
          <Cell $align="center" $v="middle">100,000</Cell>
          <Cell $align="center" $v="middle">24 сар</Cell>
          <Cell $align="center" $v="middle"><Clip $h={13}><Total>6,412,633</Total></Clip></Cell>
        </tr>
      </tbody>
    </Grid>
    <Grid $w={235} $ml={8} $mt={9}>
      <Cols widths={expenseCols} />
      <tbody>
        <tr>
          {["", "5 сар", "6 сар", "7 сар", "8 сар", "9 сар", "10 сар"].map((t) => <Cell as="th" key={t} $bg={gold} $align={t === "5 сар" ? "center" : "left"}><Clip $h={7}>{t}</Clip></Cell>)}
          <Cell $bare />
        </tr>
        <ExpenseRows rows={expenses} />
      </tbody>
    </Grid>
    <Handle $x={-7} $y={213} aria-label="Move table"><MoveIcon /></Handle>
  </Page>
);

const SharePage = () => (
  <Page>
    <Grid $w={235} $ml={8} $mt={30} $open>
      <Cols widths={expenseCols} />
      <tbody><ExpenseRows rows={expensesRest} /></tbody>
    </Grid>
    <ChartHolder><ShareChart /></ChartHolder>
    <Handle $x={244} $y={72} aria-label="Resize table" />
  </Page>
);

export default function App() {
  const tabs: [string, number][] = [["File", 61], ["Home", 58], ["Insert", 57], ["Design", 63], ["Layout", 63], ["References", 84], ["Mailings", 72], ["Review", 64], ["View", 52], ["Help", 52]];
  const samples: [string, string, number, string, boolean][] = [
    ["¶ Normal", "AaBbCcDc", 13, "#000", false],
    ["¶ List Para...", "AaBbCcDc", 13, "#000", false],
    ["No Spacing", "AaBbCcDc", 12, "#000", false],
    ["Heading 1", "AaBbCc", 17, "#2f5496", true],
    ["Heading 2", "AaBbCcD", 14, "#2f5496", true],
    ["Title", "AaB", 30, "#000", true],
    ["Subtitle", "AaBbCcD", 13, "#5a5a5a", false],
  ];
  return (
    <Window>
      <Global />
      <TitleBar>
        <Circuit />
        <Tabs>{tabs.map(([t, w]) => <Tab key={t} $w={w} $active={t === "Home"}>{t}</Tab>)}</Tabs>
        <TellMe><BulbIcon />Tell me what you want to do</TellMe>
        <Share><ShareIcon />Share</Share>
      </TitleBar>

      <Ribbon>
        <Group $w={164}>
          <ClipBody>
            <PasteButton><PasteIcon />Paste<Arrow /></PasteButton>
            <Stack>
              <LabelButton $off $gap={3}><CutIcon />Cut</LabelButton>
              <LabelButton $off $gap={3}><CopyIcon />Copy</LabelButton>
              <LabelButton $gap={2}><BrushIcon />Format Painter</LabelButton>
            </Stack>
          </ClipBody>
          <Caption><span>Clipboard</span><Launcher aria-label="Clipboard options"><LauncherIcon /></Launcher></Caption>
        </Group>
        <Divider />
        <Group $w={269}>
          <ToolBody>
            <ToolRow>
              <Combo $w={95}><select aria-label="Font"><option>Times New Ro</option></select><Arrow /></Combo>
              <Combo $w={43}><select aria-label="Font size"><option>12</option></select><Arrow /></Combo>
              <Tool $w={24} aria-label="Grow font"><GrowIcon /></Tool>
              <Tool $w={20} aria-label="Shrink font"><GrowIcon small /></Tool>
              <Bar $m={4} />
              <Tool $w={22}><CaseLabel>Aa</CaseLabel></Tool><Drop w={10} />
              <Bar $m={4} />
              <Tool $w={24} aria-label="Clear formatting"><ClearIcon /></Tool>
            </ToolRow>
            <ToolRow>
              <Tool><Bold>B</Bold></Tool><Tool><Italic>I</Italic></Tool><Tool><Under>U</Under></Tool><Drop />
              <Tool><Strike>abc</Strike></Tool>
              <Tool><Script>x<sub>2</sub></Script></Tool><Tool><Script>x<sup>2</sup></Script></Tool>
              <Bar $m={3} />
              <Tool $w={24} aria-label="Text effects"><EffectIcon /></Tool><Drop w={8} />
              <Tool $w={26} aria-label="Highlight"><HighlightIcon /></Tool><Drop w={8} />
              <Tool $w={26} aria-label="Font color"><FontColorIcon /></Tool><Drop w={8} />
            </ToolRow>
          </ToolBody>
          <Caption><span>Font</span><Launcher aria-label="Font options"><LauncherIcon /></Launcher></Caption>
        </Group>
        <Divider />
        <Group $w={231}>
          <ToolBody>
            <ToolRow>
              <Tool aria-label="Bullets"><BulletsIcon /></Tool><Drop />
              <Tool aria-label="Numbering"><NumberIcon /></Tool><Drop />
              <Tool $w={24} aria-label="Multilevel list"><MultiIcon /></Tool><Drop w={7} />
              <Bar $m={5} />
              <Tool $w={22} aria-label="Decrease indent"><IndentIcon /></Tool>
              <Tool $w={22} aria-label="Increase indent"><IndentIcon inward /></Tool>
              <Bar $m={4} />
              <Tool $w={22} aria-label="Sort"><SortIcon /></Tool>
              <Bar $m={4} />
              <Tool $w={20} aria-label="Show marks"><PilcrowIcon /></Tool>
            </ToolRow>
            <ToolRow>
              <Tool aria-label="Align left"><AlignIcon kind="left" /></Tool>
              <Tool aria-label="Center"><AlignIcon kind="center" /></Tool>
              <Tool aria-label="Align right"><AlignIcon kind="right" /></Tool>
              <Tool $on aria-label="Justify"><AlignIcon kind="justify" /></Tool>
              <Bar $m={4} />
              <Tool $w={22} aria-label="Line spacing"><SpacingIcon /></Tool><Drop w={8} />
              <Bar $m={5} />
              <Tool aria-label="Shading"><FillIcon /></Tool><Drop w={10} />
              <Tool $w={24} aria-label="Borders"><BordersIcon /></Tool><Drop w={10} />
            </ToolRow>
          </ToolBody>
          <Caption><span>Paragraph</span><Launcher aria-label="Paragraph options"><LauncherIcon /></Launcher></Caption>
        </Group>
        <Divider />
        <Group $w={540}>
          <Gallery>
            {samples.map(([name, text, size, color, light]) => (
              <StyleCell key={name} $on={name === "¶ Normal"}>
                <Sample $size={size} $color={color} $light={light}>{text}</Sample>{name}
              </StyleCell>
            ))}
            <GalleryNav>
              <button aria-label="Previous styles"><Arrow up color="#b8b8b8" /></button>
              <button aria-label="Next styles"><Arrow /></button>
              <button aria-label="All styles"><svg width="7" height="6" viewBox="0 0 7 6"><path d="M0 .5h7" stroke="#555" /><path d="M1 3h5L3.500 6z" fill="#555" /></svg></button>
            </GalleryNav>
          </Gallery>
          <Caption><span>Styles</span><Launcher aria-label="Styles options"><LauncherIcon /></Launcher></Caption>
        </Group>
        <Divider />
        <Group $w={85}>
          <EditBody>
            <LabelButton $gap={2}><IconSlot><FindIcon /></IconSlot>Find&nbsp;&nbsp;&nbsp; <Arrow /></LabelButton>
            <LabelButton $gap={2}><IconSlot><ReplaceIcon /></IconSlot>Replace</LabelButton>
            <LabelButton $gap={2}><IconSlot><SelectIcon /></IconSlot>Select<Arrow /></LabelButton>
          </EditBody>
          <Caption><span>Editing</span></Caption>
        </Group>
        <Divider />
        <Collapse aria-label="Collapse ribbon"><svg width="11" height="6" viewBox="0 0 11 6"><path d="M.5 5.500l5-5 5 5" fill="none" stroke="#555" /></svg></Collapse>
      </Ribbon>

      <Workspace>
        <Desk>
          <CoverPage />
          <BudgetPage />
          <Page>
            <ChartPage>
              <Equation>ОРЛОГО-ЗАРДАЛ= 17,930,799-15,853,077=<u>2,077,722</u></Equation>
              <IncomeChart />
              <ExpenseChart />
            </ChartPage>
          </Page>
          <MonthlyPage />
          <SharePage />
          <Page /><Page /><Page />
        </Desk>
        <Scroll>
          <ScrollButton aria-label="Scroll up"><Arrow up big /></ScrollButton>
          <ScrollTrack><ScrollThumb /></ScrollTrack>
          <ScrollButton aria-label="Scroll down"><Arrow big /></ScrollButton>
        </Scroll>
      </Workspace>

      <Status>
        <StatusItem $w={76}>Page 2 of 8</StatusItem>
        <StatusItem $w={71}>536 words</StatusItem>
        <StatusItem $w={200}>English (United States)</StatusItem>
        <Spacer />
        <ViewButton aria-label="Read mode"><ReadIcon /></ViewButton>
        <ViewButton $on aria-label="Print layout"><PrintIcon /></ViewButton>
        <ViewButton aria-label="Web layout"><WebIcon /></ViewButton>
        <ZoomButton aria-label="Zoom out"><svg width="9" height="9"><path d="M0 4.500h8" stroke="#444" /></svg></ZoomButton>
        <ZoomRange type="range" min="0" max="100" defaultValue="13" aria-label="Zoom" />
        <ZoomButton aria-label="Zoom in"><svg width="9" height="9"><path d="M0 4.500h9M4.500 0v9" stroke="#444" /></svg></ZoomButton>
        <ZoomValue>32%</ZoomValue>
      </Status>
    </Window>
  );
}
